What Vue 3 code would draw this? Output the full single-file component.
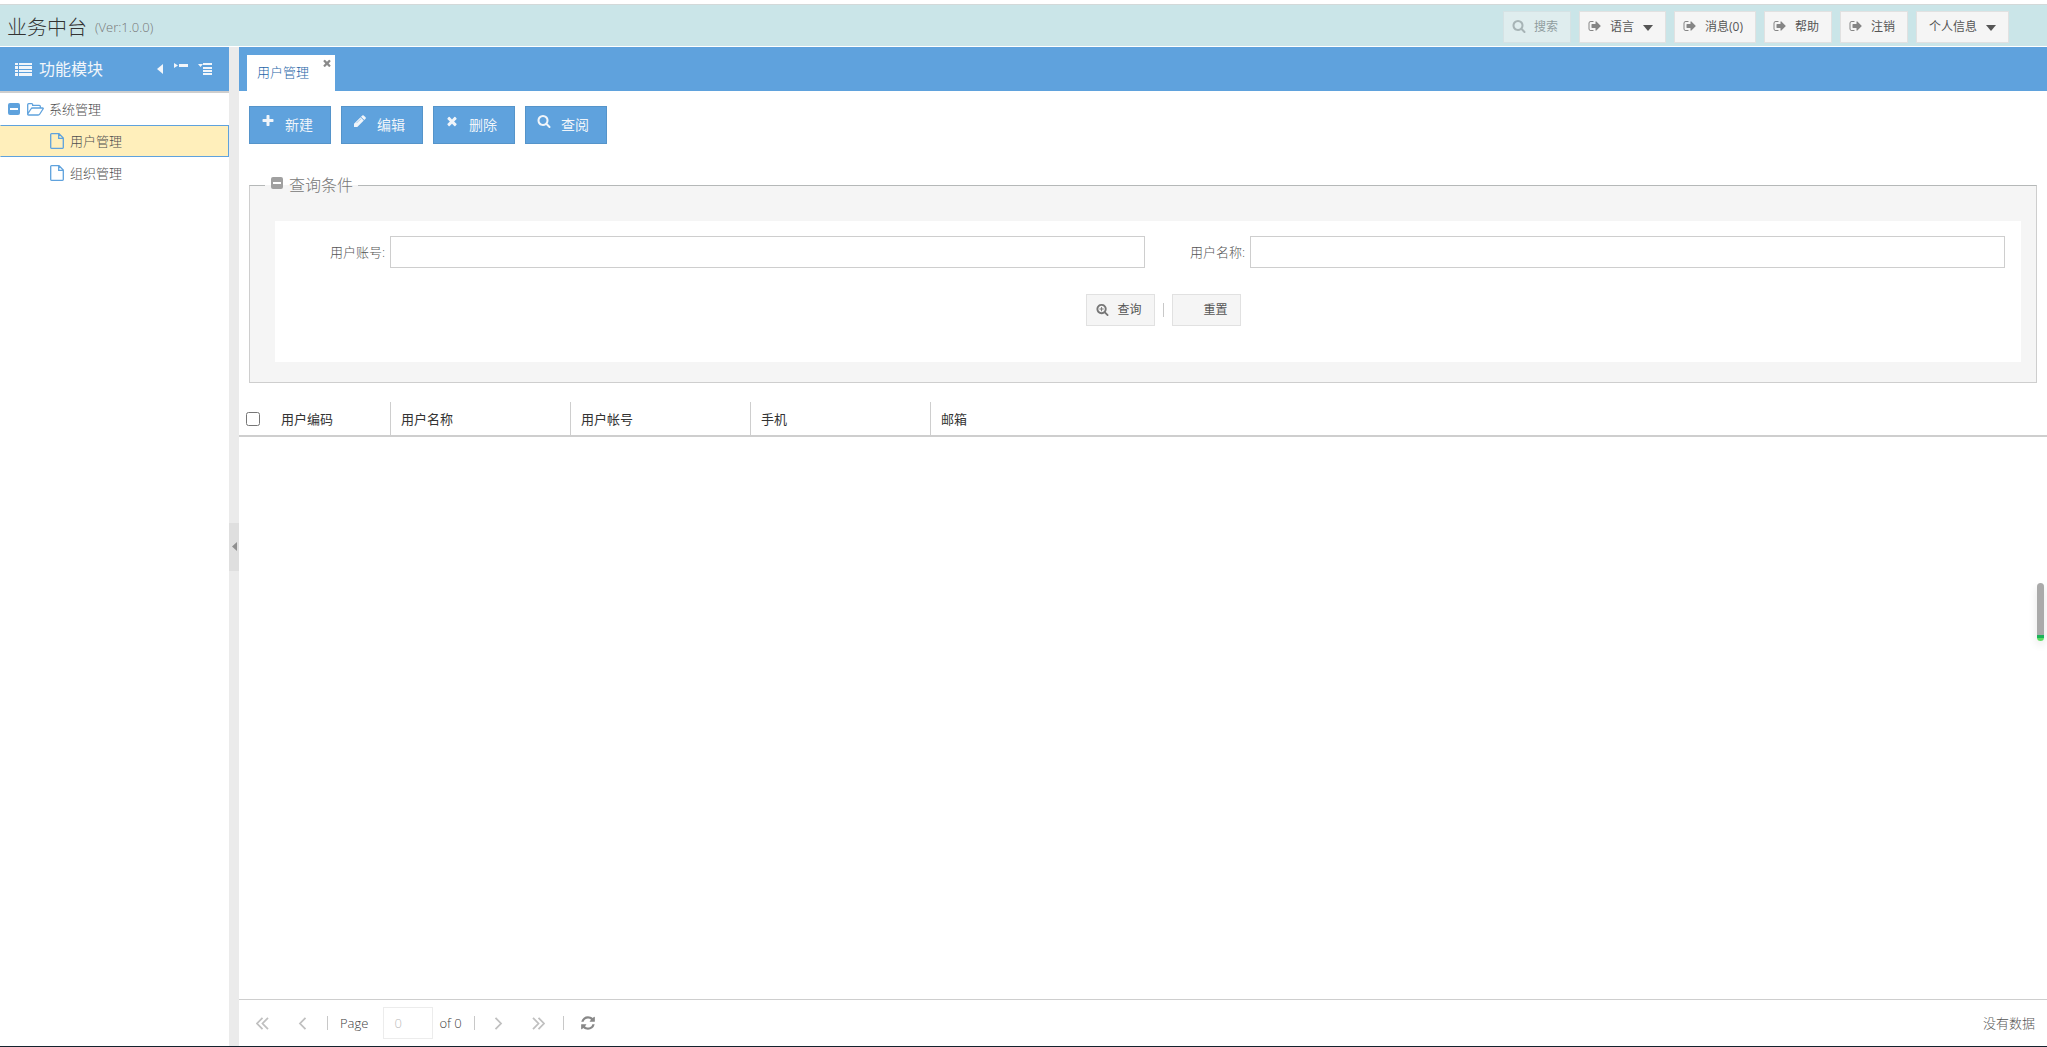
<script setup>
import { ref } from 'vue'

const paths = {
  search: 'M1216 832q0-185-131.5-316.5t-316.5-131.5-316.5 131.5-131.5 316.5 131.5 316.5 316.5 131.5 316.5-131.5 131.5-316.5zm512 832q0 52-38 90t-90 38q-54 0-90-38l-343-342q-179 124-399 124-143 0-273.5-55.5t-225-150-150-225-55.5-273.5 55.5-273.5 150-225 225-150 273.5-55.5 273.5 55.5 225 150 150 225 55.5 273.5q0 220-124 399l343 343q37 37 37 90z',
  signOut: 'M704 1440q0 4 1 20t.5 26.5-3 23.5-10 19.5-20.5 6.5h-320q-119 0-203.5-84.5t-84.5-203.5v-704q0-119 84.5-203.5t203.5-84.5h320q13 0 22.5 9.5t9.5 22.5q0 4 1 20t.5 26.5-3 23.5-10 19.5-20.5 6.5h-320q-66 0-113 47t-47 113v704q0 66 47 113t113 47h312l11.5 1 11.5 3 8 5.5 7 9 2 13.5zm928-544q0 26-19 45l-544 544q-19 19-45 19t-45-19-19-45v-288h-448q-26 0-45-19t-19-45v-384q0-26 19-45t45-19h448v-288q0-26 19-45t45-19 45 19l544 544q19 19 19 45z',
  plus: 'M1600 736v192q0 40-28 68t-68 28h-416v416q0 40-28 68t-68 28h-192q-40 0-68-28t-28-68v-416h-416q-40 0-68-28t-28-68v-192q0-40 28-68t68-28h416v-416q0-40 28-68t68-28h192q40 0 68 28t28 68v416h416q40 0 68 28t28 68z',
  pencil: 'M1014 608l-7-22-17 7-542 542 15 39 17-7 542-542zm-54-192l416 416-832 832h-416v-416zm683 96q0 53-37 90l-166 166-416-416 166-165q36-38 90-38 53 0 91 38l235 234q37 39 37 91z',
  times: 'M1490 1322q0 40-28 68l-136 136q-28 28-68 28t-68-28l-294-294-294 294q-28 28-68 28t-68-28l-136-136q-28-28-28-68t28-68l294-294-294-294q-28-28-28-68t28-68l136-136q28-28 68-28t68 28l294 294 294-294q28-28 68-28t68 28l136 136q28 28 28 68t-28 68l-294 294 294 294q28 28 28 68z',
  refresh: 'M1639 1056q0 5-1 7-64 268-268 434.5t-478 166.5q-146 0-282.5-55t-243.5-157l-129 129q-19 19-45 19t-45-19-19-45v-448q0-26 19-45t45-19h448q26 0 45 19t19 45-19 45l-137 137q71 66 161 102t187 36q134 0 250-65t186-179q11-17 53-117 8-23 30-23h192q13 0 22.5 9.5t9.5 22.5zm25-800v448q0 26-19 45t-45 19h-448q-26 0-45-19t-19-45 19-45l138-138q-148-137-349-137-134 0-250 65t-186 179q-11 17-53 117-8 23-30 23h-199q-13 0-22.5-9.5t-9.5-22.5v-7q65-268 270-434.5t480-166.5q146 0 284 55.5t245 156.5l130-129q19-19 45-19t45 19 19 45z',
}

const headerButtons = [
  { label: '搜索', icon: 'search', disabled: true },
  { label: '语言', icon: 'signOut', menu: true },
  { label: '消息(0)', icon: 'signOut' },
  { label: '帮助', icon: 'signOut' },
  { label: '注销', icon: 'signOut' },
  { label: '个人信息', menu: true },
]

const leaves = ['用户管理', '组织管理']
const selected = ref('用户管理')

const tools = [
  { label: '新建', icon: 'plus' },
  { label: '编辑', icon: 'pencil' },
  { label: '删除', icon: 'times' },
  { label: '查阅', icon: 'search' },
]

const columns = ['用户编码', '用户名称', '用户帐号', '手机', '邮箱']
const account = ref('')
const name = ref('')

function reset() {
  account.value = ''
  name.value = ''
}
</script>

<template>
  <div class="app">
    <header class="topbar">
      <h1>业务中台</h1>
      <span class="version">(Ver:1.0.0)</span>
      <div class="top-actions">
        <button v-for="b in headerButtons" :key="b.label" type="button" class="top-btn" :disabled="b.disabled">
          <svg v-if="b.icon" class="top-icon" viewBox="0 0 1792 1792"><path :d="paths[b.icon]" /></svg>
          <span>{{ b.label }}</span>
          <svg v-if="b.menu" class="caret" viewBox="0 0 10 6"><path d="M0 0h10L5 6z" /></svg>
        </button>
      </div>
    </header>

    <div class="body">
      <aside class="sidebar">
        <div class="side-head">
          <svg class="list-icon" viewBox="0 0 17 13">
            <path d="M0 0h3v2H0zM4 0h13v2H4zM0 3h3v3H0zM4 3h13v3H4zM0 7h3v2H0zM4 7h13v2H4zM0 10h3v3H0zM4 10h13v3H4z" />
          </svg>
          <h2>功能模块</h2>
          <div class="side-tools">
            <button type="button" aria-label="收起面板">
              <svg class="tool-left" viewBox="0 0 7 12"><path d="M6 1v10L0 6z" /></svg>
            </button>
            <button type="button" aria-label="全部折叠">
              <svg class="tool-tree" viewBox="0 0 14 13"><path d="M0 0l4 2.5L0 5zM5 1h9v3H5z" /></svg>
            </button>
            <button type="button" aria-label="全部展开">
              <svg class="tool-tree" viewBox="0 0 14 13"><path d="M0 1h5L2.5 4zM5 0h9v2H5zM5 4h9v2H5zM5 7h9v2H5zM5 10h9v2H5z" /></svg>
            </button>
          </div>
        </div>
        <ul class="tree">
          <li>
            <div class="node">
              <svg class="minus" viewBox="0 0 12 12"><path fill-rule="evenodd" d="M2 0h8q2 0 2 2v8q0 2-2 2H2q-2 0-2-2V2q0-2 2-2zM2 5v2h8V5z" /></svg>
              <svg class="folder" viewBox="0 0 17 13">
                <path d="M.7 11V1.700q0-1 1-1h3q1 0 1 1v.6h6.600q1 0 1 1v1.700M.7 11l3.200-5q.6-1 1.600-1h10q1.200 0 .5 1l-3.200 5q-.6 1-1.600 1H1.500q-.8 0-.8-1z" />
              </svg>
              <span>系统管理</span>
            </div>
            <ul>
              <li v-for="leaf in leaves" :key="leaf">
                <a href="#" class="node leaf" :class="{ selected: leaf === selected }" @click.prevent="selected = leaf">
                  <svg class="doc" viewBox="0 0 14 16">
                    <path d="M1.500 .7h7.500l4.300 4.300v9.500q0 .8-.8.8h-11q-.8 0-.8-.8v-13q0-.8.8-.8zM8.700 1v4.300H13" />
                  </svg>
                  <span>{{ leaf }}</span>
                </a>
              </li>
            </ul>
          </li>
        </ul>
      </aside>

      <div class="splitter">
        <button type="button" aria-label="折叠侧栏">
          <svg viewBox="0 0 5 9"><path d="M5 0v9L0 4.500z" /></svg>
        </button>
      </div>

      <main class="content">
        <nav class="tabs">
          <div class="tab">
            <a href="#">用户管理</a>
            <button type="button" aria-label="关闭">
              <svg viewBox="240 240 1312 1312"><path :d="paths.times" /></svg>
            </button>
          </div>
        </nav>

        <div class="toolbar">
          <button v-for="t in tools" :key="t.label" type="button">
            <svg viewBox="0 0 1792 1792"><path :d="paths[t.icon]" /></svg>
            <span>{{ t.label }}</span>
          </button>
        </div>

        <fieldset class="query">
          <legend>
            <svg class="minus" viewBox="0 0 12 12"><path fill-rule="evenodd" d="M2 0h8q2 0 2 2v8q0 2-2 2H2q-2 0-2-2V2q0-2 2-2zM2 5v2h8V5z" /></svg>
            <span>查询条件</span>
          </legend>
          <form @submit.prevent>
            <div class="fields">
              <div class="field">
                <label for="account">用户账号:</label>
                <input id="account" v-model="account" type="text">
              </div>
              <div class="field">
                <label for="name">用户名称:</label>
                <input id="name" v-model="name" type="text">
              </div>
            </div>
            <div class="form-actions">
              <button type="submit">
                <svg viewBox="0 0 1792 1792">
                  <path :d="paths.search" />
                  <path d="M704 544h128v224h224v128H832v224H704V896H480V768h224z" />
                </svg>
                <span>查询</span>
              </button>
              <i class="sep"></i>
              <button type="button" @click="reset">
                <i class="blank"></i>
                <span>重置</span>
              </button>
            </div>
          </form>
        </fieldset>

        <div class="grid">
          <table>
            <thead>
              <tr>
                <th class="check"><input type="checkbox" aria-label="全选"></th>
                <th v-for="(c, i) in columns" :key="c" :class="{ first: i === 0, last: i === 4 }">{{ c }}</th>
              </tr>
            </thead>
          </table>
        </div>

        <footer class="pager">
          <button type="button" disabled aria-label="首页"><svg viewBox="0 0 13 13"><path d="M6.500 .8L1 6.500l5.500 5.700M12 .8L6.500 6.500l5.500 5.700" /></svg></button>
          <button type="button" disabled aria-label="上一页"><svg viewBox="0 0 13 13"><path d="M9.500 .8L4 6.500l5.500 5.700" /></svg></button>
          <i class="sep"></i>
          <label for="page">Page</label>
          <input id="page" type="text" value="0" disabled>
          <span class="total">of 0</span>
          <i class="sep"></i>
          <button type="button" disabled aria-label="下一页"><svg viewBox="0 0 13 13"><path d="M3.500 .8L9 6.500l-5.500 5.700" /></svg></button>
          <button type="button" disabled aria-label="末页"><svg viewBox="0 0 13 13"><path d="M1 .8l5.500 5.700L1 12.200M6.500 .8L12 6.500l-5.500 5.700" /></svg></button>
          <i class="sep"></i>
          <button type="button" class="refresh" aria-label="刷新"><svg viewBox="0 0 1792 1792"><path :d="paths.refresh" /></svg></button>
          <span class="empty">没有数据</span>
        </footer>
      </main>
    </div>

    <div class="float-bar"></div>
  </div>
</template>

<style>
body {
  margin: 0;
  background: #fff;
}
</style>

<style scoped>
* {
  box-sizing: border-box;
}

.app {
  display: flex;
  flex-direction: column;
  min-height: 100vh;
  padding-top: 4px;
  border-bottom: 1px solid #14232e;
  font-family: "Open Sans", "Noto Sans CJK SC", sans-serif;
  font-size: 13px;
  font-weight: 300;
  line-height: 20px;
  color: #404040;
}

button {
  display: flex;
  align-items: center;
  margin: 0;
  padding: 0;
  border: 0;
  background: none;
  color: inherit;
  font: inherit;
  white-space: nowrap;
}

svg {
  display: block;
  flex: none;
  fill: currentColor;
}

h1,
h2 {
  margin: 0;
  font-weight: 300;
}

ul {
  margin: 0;
  padding: 0;
  list-style: none;
}

a {
  color: inherit;
  text-decoration: none;
}

/* header */
.topbar {
  display: flex;
  align-items: center;
  height: 43px;
  padding: 0 38px 0 7px;
  border-top: 1px solid #d3d9d9;
  border-bottom: 1px solid #fff;
  background: #cae5e8;
}

h1 {
  font-size: 20px;
  line-height: 32px;
  color: #333;
  padding-top: 4px;
}

.version {
  margin-left: 8px;
  padding-top: 2px;
  color: #777;
}

.top-actions {
  display: flex;
  gap: 8px;
  margin-left: auto;
  padding-top: 2px;
}

.top-btn {
  height: 32px;
  padding: 0 12px 0 8px;
  border: 1px solid #e1e1e1;
  background: #f5f5f5;
  color: #555;
  font-size: 12px;
  font-weight: 400;
}

.top-btn:last-child {
  padding-left: 12px;
}

.top-btn:disabled {
  opacity: 0.5;
}

.top-icon {
  width: 14px;
  height: 14px;
  margin: 0 8px 2px 0;
  color: #858585;
}

.caret {
  width: 10px;
  height: 6px;
  margin: 2px 0 0 9px;
}

/* sidebar */
.body {
  display: flex;
  flex: 1;
}

.sidebar {
  width: 229px;
  flex: none;
}

.side-head {
  display: flex;
  align-items: center;
  height: 46px;
  padding: 0 17px 0 15px;
  border-bottom: 2px solid #cecece;
  background: #5fa2dd;
  color: #f2f6fa;
}

.list-icon {
  width: 17px;
  height: 13px;
}

h2 {
  margin-left: 7px;
  font-size: 16px;
  font-weight: 400;
}

.side-tools {
  display: flex;
  align-items: center;
  gap: 10px;
  margin-left: auto;
}

.tool-left {
  width: 7px;
  height: 12px;
}

.tool-tree {
  width: 14px;
  height: 13px;
}

.node {
  display: flex;
  align-items: center;
  height: 32px;
  padding-left: 8px;
  color: #505050;
}

.minus {
  width: 12px;
  height: 12px;
}

.tree .minus {
  color: #5fa2dd;
}

.folder,
.doc {
  width: 17px;
  height: 13px;
  margin: 0 5px 0 7px;
  fill: none;
  stroke: #5fa2dd;
  stroke-width: 1.3;
}

.doc {
  width: 14px;
  height: 16px;
  margin: 0 6px 0 0;
}

.leaf {
  padding-left: 49px;
  border: 1px solid transparent;
}

.leaf.selected {
  border-color: #5fa2dd;
  border-left-color: #ffefbb;
  background: #ffefbb;
}

.splitter {
  display: flex;
  align-items: center;
  width: 10px;
  flex: none;
  background: #ebebeb;
}

.splitter button {
  width: 10px;
  height: 48px;
  padding-left: 3px;
  background: #dfdfdf;
  color: #8f8f8f;
}

.splitter svg {
  width: 5px;
  height: 9px;
}

/* content */
.content {
  display: flex;
  flex: 1;
  flex-direction: column;
  min-width: 0;
}

.tabs {
  display: flex;
  height: 44px;
  padding: 8px 8px 0;
  background: #5fa2dd;
}

.tab {
  display: flex;
  width: 88px;
  padding: 7px 4px 0 10px;
  background: #fff;
  color: #1f66a8;
}

.tab button {
  align-self: flex-start;
  margin: -3px 0 0 auto;
  color: #8a8a8a;
}

.tab svg {
  width: 8px;
  height: 8px;
}

.toolbar {
  display: flex;
  gap: 10px;
  padding: 15px 10px 0;
}

.toolbar button {
  width: 82px;
  height: 38px;
  padding-left: 11px;
  border: 1px solid #5594ca;
  background: #5fa2dd;
  color: #f0f5fa;
  font-size: 14px;
  font-weight: 400;
}

.toolbar svg {
  width: 14px;
  height: 14px;
  margin: 0 10px 8px 0;
}

.query {
  min-width: 0;
  margin: 30px 10px 0;
  padding: 25px 15px 20px 25px;
  border: 1px solid #cecece;
  border-top-color: #b5b8b8;
  background: #f5f5f5;
}

legend {
  display: flex;
  align-items: center;
  height: 22px;
  margin-left: -10px;
  padding: 0 5px 0 6px;
  color: #777;
  font-size: 16px;
}

legend .minus {
  margin: 0 6px 4px 0;
  color: #a0a0a0;
}

form {
  height: 141px;
  padding: 15px 16px 0 10px;
  background: #fff;
}

.fields,
.field {
  display: flex;
  align-items: center;
}

.field {
  flex: 1;
  min-width: 0;
}

.field label {
  width: 105px;
  flex: none;
  padding-right: 5px;
  color: #555;
  text-align: right;
}

input[type="text"] {
  min-width: 0;
  height: 32px;
  padding: 0 10px;
  border: 1px solid #cecece;
  background: #fff;
  color: #404040;
  font: inherit;
}

.field input {
  flex: 1;
}

.form-actions {
  display: flex;
  align-items: center;
  justify-content: center;
  gap: 8px;
  margin-top: 26px;
  padding-left: 36px;
}

.form-actions button {
  width: 69px;
  height: 32px;
  padding-left: 9px;
  border: 1px solid #e1e1e1;
  background: #f5f5f5;
  color: #555;
  font-size: 12px;
  font-weight: 400;
}

.form-actions svg {
  width: 13px;
  height: 13px;
  margin: 0 9px 2px 0;
  color: #777;
}

.blank {
  width: 22px;
}

.sep {
  width: 1px;
  height: 14px;
  flex: none;
  background: #c8c8c8;
}

.grid {
  flex: 1;
  margin-top: 19px;
}

table {
  width: 100%;
  border-bottom: 2px solid #cecece;
  border-spacing: 0;
  table-layout: fixed;
}

th {
  width: 180px;
  height: 33px;
  padding: 0 10px;
  border-right: 1px solid #cecece;
  color: #333;
  font-weight: 400;
  text-align: left;
}

.check {
  width: 32px;
  padding: 0 0 0 7px;
  border: 0;
}

.check input {
  display: block;
  width: 14px;
  height: 14px;
  margin: 0;
}

.first {
  width: 120px;
}

.last {
  width: auto;
  border: 0;
}

/* pager */
.pager {
  display: flex;
  align-items: center;
  height: 47px;
  padding: 0 12px 0 17px;
  border-top: 1px solid #cecece;
}

.pager button {
  width: 13px;
}

.pager button + button {
  margin-left: 27px;
}

.pager .sep {
  margin: 0 12px 0 18px;
}

.pager svg {
  width: 13px;
  height: 13px;
}

.pager button:disabled svg {
  fill: none;
  stroke: #c0c0c0;
  stroke-width: 1.8;
}

.pager .total + .sep {
  margin: 0 17px 0 12px;
}

.pager input {
  width: 50px;
  margin: 0 6px 0 15px;
  border-color: #ececec;
  color: #bbb;
}

.pager .refresh {
  width: 16px;
  margin-left: 4px;
  color: #888;
}

.pager .refresh svg {
  width: 16px;
  height: 16px;
}

.empty {
  margin-left: auto;
  color: #555;
}

.float-bar {
  position: absolute;
  top: 583px;
  right: 3px;
  width: 7px;
  height: 58px;
  border-radius: 4px;
  background: linear-gradient(#aaa 52px, #1bb45a 52px, #1bb45a 55px, #5fdc64 55px);
  box-shadow: 0 4px 8px rgba(0, 0, 0, 0.1);
}
</style>
